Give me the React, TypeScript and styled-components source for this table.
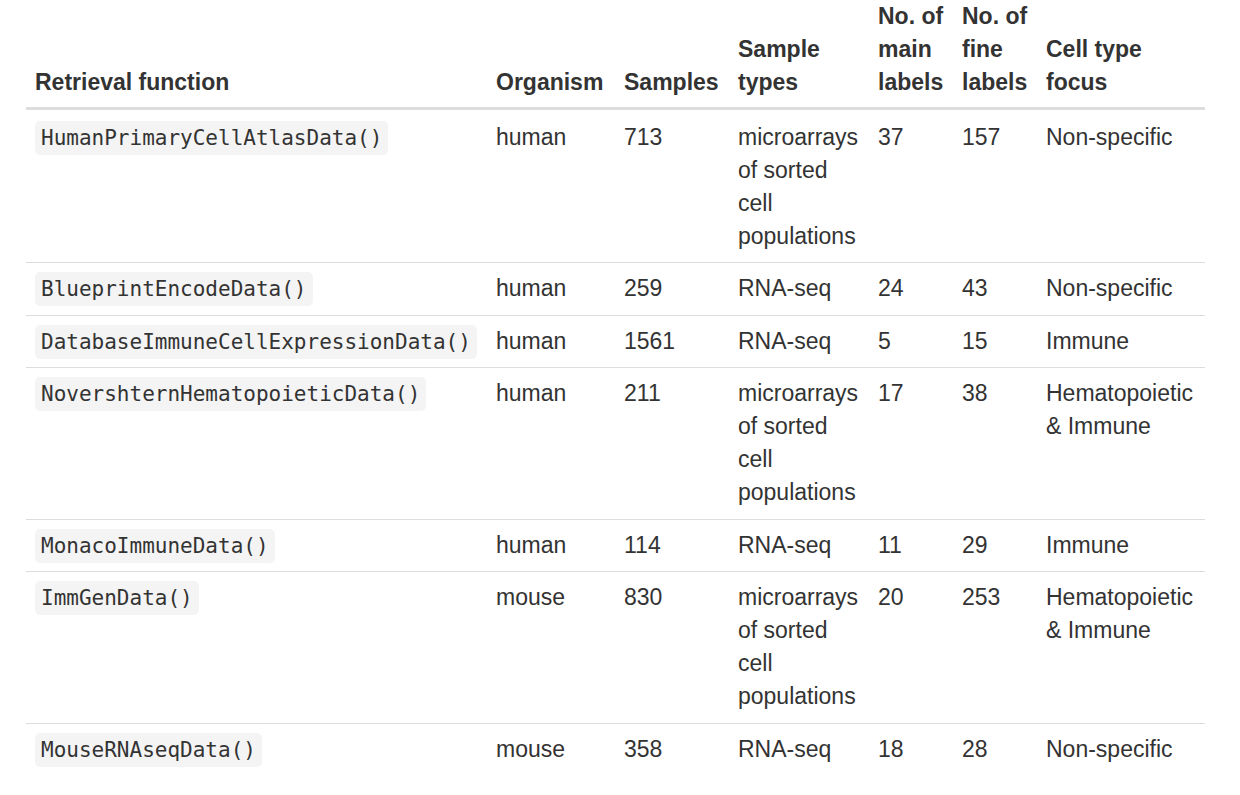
import React from "react";
import styled, { createGlobalStyle } from "styled-components";

const Global = createGlobalStyle`
  html, body { margin: 0; padding: 0; background: #ffffff; }
  body { overflow: hidden; }
  *, *::before, *::after { box-sizing: border-box; }
`;

const Page = styled.div`
  padding-left: 26px;
  margin-top: -11px;
`;

const Table = styled.table`
  width: 1179px;
  table-layout: fixed;
  border-collapse: collapse;
  border-spacing: 0;
  font-family: "Liberation Sans", Arial, Helvetica, sans-serif;
  font-size: 23px;
  line-height: 33.2px;
  color: #333333;
`;

const Th = styled.th<{ $w: number }>`
  width: ${(p) => p.$w}px;
  padding: 11px 9px 7px;
  text-align: left;
  vertical-align: bottom;
  font-weight: bold;
  white-space: nowrap;
  border-bottom: 3px solid #dddddd;
`;

const Row = styled.tr`
  &:first-child > td {
    padding-top: 11px;
  }
  & + & > td {
    border-top: 1px solid #dddddd;
  }
`;

const Td = styled.td`
  padding: 9px;
  vertical-align: top;
  text-align: left;
`;

const Code = styled.code`
  font-family: "DejaVu Sans Mono", "Liberation Mono", monospace;
  font-size: 21px;
  line-height: 1;
  padding: 5px 6px;
  background: #f4f4f4;
  border-radius: 5px;
  color: #333333;
`;

type R = {
  fn: string;
  org: string;
  n: string;
  type: React.ReactNode;
  main: string;
  fine: string;
  focus: React.ReactNode;
};

const micro = (
  <>
    microarrays
    <br />
    of sorted
    <br />
    cell
    <br />
    populations
  </>
);

const hemato = (
  <>
    Hematopoietic
    <br />
    &amp; Immune
  </>
);

const rows: R[] = [
  { fn: "HumanPrimaryCellAtlasData()", org: "human", n: "713", type: micro, main: "37", fine: "157", focus: "Non-specific" },
  { fn: "BlueprintEncodeData()", org: "human", n: "259", type: "RNA-seq", main: "24", fine: "43", focus: "Non-specific" },
  { fn: "DatabaseImmuneCellExpressionData()", org: "human", n: "1561", type: "RNA-seq", main: "5", fine: "15", focus: "Immune" },
  { fn: "NovershternHematopoieticData()", org: "human", n: "211", type: micro, main: "17", fine: "38", focus: hemato },
  { fn: "MonacoImmuneData()", org: "human", n: "114", type: "RNA-seq", main: "11", fine: "29", focus: "Immune" },
  { fn: "ImmGenData()", org: "mouse", n: "830", type: micro, main: "20", fine: "253", focus: hemato },
  { fn: "MouseRNAseqData()", org: "mouse", n: "358", type: "RNA-seq", main: "18", fine: "28", focus: "Non-specific" },
];

export default function App() {
  return (
    <>
      <Global />
      <Page>
        <Table>
          <thead>
            <tr>
              <Th $w={461}>Retrieval function</Th>
              <Th $w={128}>Organism</Th>
              <Th $w={114}>Samples</Th>
              <Th $w={140}>Sample<br />types</Th>
              <Th $w={84}>No. of<br />main<br />labels</Th>
              <Th $w={84}>No. of<br />fine<br />labels</Th>
              <Th $w={168}>Cell type<br />focus</Th>
            </tr>
          </thead>
          <tbody>
            {rows.map((r) => (
              <Row key={r.fn}>
                <Td><Code>{r.fn}</Code></Td>
                <Td>{r.org}</Td>
                <Td>{r.n}</Td>
                <Td>{r.type}</Td>
                <Td>{r.main}</Td>
                <Td>{r.fine}</Td>
                <Td>{r.focus}</Td>
              </Row>
            ))}
          </tbody>
        </Table>
      </Page>
    </>
  );
}
